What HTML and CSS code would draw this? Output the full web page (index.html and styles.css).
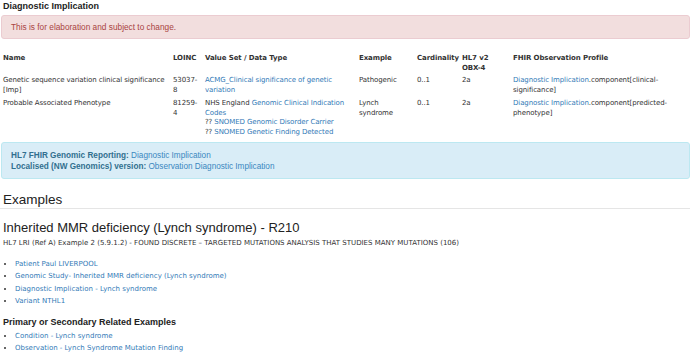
FILE: index.html
```html
<!DOCTYPE html>
<html>
  <head>
    <meta charset="UTF-8" />
    <title>Diagnostic Implication</title>
    <link rel="stylesheet" href="styles.css">
  </head>

  <body>
    <div class="page">
      <h3 class="section-title">Diagnostic Implication</h3>

      <div class="alert alert-danger">This is for elaboration and subject to change.</div>

      <table class="data-table">
        <colgroup>
          <col class="col-name" />
          <col class="col-loinc" />
          <col class="col-valueset" />
          <col class="col-example" />
          <col class="col-card" />
          <col class="col-hl7" />
          <col />
        </colgroup>
        <thead>
          <tr>
            <th>Name</th>
            <th>LOINC</th>
            <th>Value Set / Data Type</th>
            <th>Example</th>
            <th class="nowrap">Cardinality</th>
            <th>HL7 v2 OBX-4</th>
            <th>FHIR Observation Profile</th>
          </tr>
        </thead>
        <tbody>
          <tr>
            <td>Genetic sequence variation clinical significance [Imp]</td>
            <td>53037-8</td>
            <td><a href="#">ACMG_Clinical significance of genetic variation</a></td>
            <td>Pathogenic</td>
            <td>0..1</td>
            <td>2a</td>
            <td><a href="#">Diagnostic Implication</a>.component[clinical-significance]</td>
          </tr>
          <tr>
            <td>Probable Associated Phenotype</td>
            <td>81259-4</td>
            <td>NHS England <a href="#">Genomic Clinical Indication Codes</a><br />?? <a href="#">SNOMED Genomic Disorder Carrier</a><br />?? <a href="#">SNOMED Genetic Finding Detected</a></td>
            <td>Lynch syndrome</td>
            <td>0..1</td>
            <td>2a</td>
            <td><a href="#">Diagnostic Implication</a>.component[predicted-phenotype]</td>
          </tr>
        </tbody>
      </table>

      <div class="alert alert-info">
        <b>HL7 FHIR Genomic Reporting:</b> <a href="#">Diagnostic Implication</a><br />
        <b>Localised (NW Genomics) version:</b> <a href="#">Observation Diagnostic Implication</a>
      </div>

      <h2 class="page-title">Examples</h2>

      <h2 class="example-title">Inherited MMR deficiency (Lynch syndrome) - R210</h2>
      <p class="example-desc">HL7 LRI (Ref A) Example 2 (5.9.1.2) - FOUND DISCRETE – TARGETED MUTATIONS ANALYSIS THAT STUDIES MANY MUTATIONS (106)</p>

      <ul class="link-list">
        <li><a href="#">Patient Paul LIVERPOOL</a></li>
        <li><a href="#">Genomic Study- Inherited MMR deficiency (Lynch syndrome)</a></li>
        <li><a href="#">Diagnostic Implication - Lynch syndrome</a></li>
        <li><a href="#">Variant NTHL1</a></li>
      </ul>

      <h3 class="section-title related">Primary or Secondary Related Examples</h3>

      <ul class="link-list related-list">
        <li><a href="#">Condition - Lynch syndrome</a></li>
        <li><a href="#">Observation - Lynch Syndrome Mutation Finding</a></li>
      </ul>
    </div>
  </body>
</html>
```

FILE: styles.css
```css
* {
  box-sizing: border-box;
}

body {
  margin: 0;
  font-family: "DejaVu Sans", Verdana, sans-serif;
  font-size: 7px;
  line-height: 9.5px;
  color: #333;
  background-color: #fff;
}

a {
  color: #337ab7;
  text-decoration: none;
}

.page {
  height: 355px;
  overflow: hidden;
}

.section-title {
  font-family: "Liberation Sans", Arial, sans-serif;
  font-size: 9px;
  font-weight: 700;
  line-height: 13px;
  color: #222;
  margin: 0;
  padding: 0 3px;
}

.alert {
  font-family: "Liberation Sans", Arial, sans-serif;
  border: 1px solid transparent;
  border-radius: 3px;
  margin: 2px 0 0 1px;
}

.alert-danger {
  background-color: #f2dede;
  border-color: #ebccd1;
  color: #a94442;
  font-size: 8.3px;
  line-height: 12px;
  padding: 5px 9px;
  height: 24px;
}

.alert-info {
  background-color: #d9edf7;
  border-color: #bce8f1;
  color: #31708f;
  font-size: 8.2px;
  line-height: 11px;
  padding: 7px 9px;
  margin-top: 3px;
  height: 37px;
}

.alert-info b {
  font-weight: 700;
}

.alert-info a {
  color: #3a87c0;
}

/* table */
.data-table {
  border-collapse: collapse;
  table-layout: fixed;
  width: 690px;
  margin-top: 13px;
  font-size: 7px;
  letter-spacing: -0.1px;
}

.col-name { width: 170px; }
.col-loinc { width: 32px; }
.col-valueset { width: 154px; }
.col-example { width: 58px; }
.col-card { width: 45px; }
.col-hl7 { width: 51px; }

.data-table th,
.data-table td {
  text-align: left;
  vertical-align: top;
  padding: 2px 0 2px 3px;
}

.data-table th {
  font-weight: 700;
  padding-bottom: 1px;
}

.data-table th:nth-child(2),
.data-table td:nth-child(2) {
  padding-right: 3px;
}

.data-table th:nth-child(4),
.data-table td:nth-child(4) {
  padding-right: 4px;
}

.data-table th:nth-child(6) {
  padding-right: 10px;
}

.data-table .nowrap {
  white-space: nowrap;
}

/* examples */
.page-title {
  font-family: "Liberation Sans", Arial, sans-serif;
  font-size: 13.5px;
  font-weight: 400;
  line-height: 16px;
  color: #222;
  margin: 13px 0 0;
  padding: 0 3px;
  border-bottom: 1px solid #e5e5e5;
}

.example-title {
  font-family: "Liberation Sans", Arial, sans-serif;
  font-size: 13px;
  font-weight: 400;
  line-height: 15px;
  color: #222;
  margin: 10.5px 0 0;
  padding: 0 3px;
}

.example-desc {
  margin: 4.5px 0 0;
  padding: 0 3px;
}

.link-list {
  margin: 9px 0 0;
  padding: 0 0 0 15px;
  list-style: disc;
}

.link-list li {
  line-height: 12.5px;
}

.related {
  margin-top: 9px;
  line-height: 11px;
}

.related-list {
  margin-top: 2px;
}
```
